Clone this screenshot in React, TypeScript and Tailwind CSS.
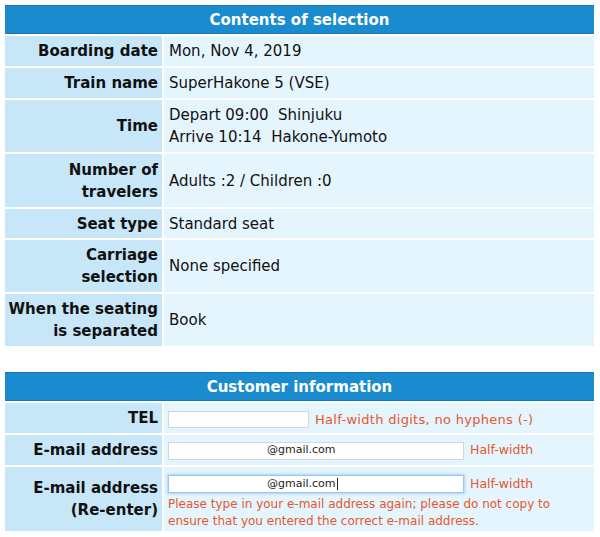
import React from "react";

const font = { fontFamily: '"DejaVu Sans", Verdana, sans-serif' };

function Label({ children, h }: { children: React.ReactNode; h: string }) {
  return (
    <div className={`bg-[#c7e6f8] flex items-center justify-end text-right pr-[4px] font-bold text-[15px] leading-[22px] text-[#111] ${h}`}>
      <div>{children}</div>
    </div>
  );
}

function Value({ children, h }: { children: React.ReactNode; h: string }) {
  return (
    <div className={`bg-[#e5f5fd] flex items-center pl-[5px] text-[15px] leading-[22px] text-[#111] ${h}`}>
      <div>{children}</div>
    </div>
  );
}

function Header({ title }: { title: string }) {
  return (
    <div className="col-span-2 h-[29px] pt-[2px] bg-[#1b8bcf] border-t border-b border-[#1677b5] flex items-center justify-center text-white font-bold text-[15px]">
      {title}
    </div>
  );
}

export default function App() {
  return (
    <div className="w-[600px] h-[537px] bg-white pt-[5px]" style={font}>
      <div className="ml-[5px] w-[589px] grid grid-cols-[157px_430px] gap-[2px]">
        <Header title="Contents of selection" />
        <Label h="h-[30px]">Boarding date</Label>
        <Value h="h-[30px]">Mon, Nov 4, 2019</Value>
        <Label h="h-[30px]">Train name</Label>
        <Value h="h-[30px]">SuperHakone 5 (VSE)</Value>
        <Label h="h-[52px]">Time</Label>
        <Value h="h-[52px]">
          <div className="whitespace-pre">Depart 09:00{"  "}Shinjuku</div>
          <div className="whitespace-pre">Arrive 10:14{"  "}Hakone-Yumoto</div>
        </Value>
        <Label h="h-[53px]">
          Number of
          <br />
          travelers
        </Label>
        <Value h="h-[53px]">Adults :2 / Children :0</Value>
        <Label h="h-[29px]">Seat type</Label>
        <Value h="h-[29px]">Standard seat</Value>
        <Label h="h-[52px]">
          Carriage
          <br />
          selection
        </Label>
        <Value h="h-[52px]">None specified</Value>
        <Label h="h-[52px]">
          When the seating
          <br />
          is separated
        </Label>
        <Value h="h-[52px]">Book</Value>
      </div>

      <div className="ml-[5px] mt-[26px] w-[589px] grid grid-cols-[157px_430px] gap-[2px]">
        <Header title="Customer information" />
        <Label h="h-[30px]">TEL</Label>
        <div className="bg-[#e5f5fd] h-[30px] flex items-center pl-[4px] pt-[3px]">
          <div className="w-[141px] h-[17px] bg-white border border-[#cfd6dc]" />
          <span className="ml-[6px] text-[13px] tracking-[0.3px] text-[#e5572f]">Half-width digits, no hyphens (-)</span>
        </div>
        <Label h="h-[30px]">E-mail address</Label>
        <div className="bg-[#e5f5fd] h-[30px] flex items-center pl-[4px] pt-[1px]">
          <div className="w-[296px] h-[18px] bg-white border border-[#cfd6dc] flex items-center pl-[98px] text-[11px] text-[#222]">
            @gmail.com
          </div>
          <span className="ml-[6px] text-[12.5px] text-[#e5572f]">Half-width</span>
        </div>
        <Label h="h-[64px]">
          E-mail address
          <br />
          (Re-enter)
        </Label>
        <div className="bg-[#e5f5fd] h-[64px] pl-[4px] pt-[8px]">
          <div className="flex items-center">
            <div className="w-[296px] h-[18px] bg-white border border-[#9cc6ee] shadow-[0_0_2px_1px_#a9d0f5] flex items-center pl-[98px] text-[11px] text-[#222]">
              @gmail.com<span className="inline-block w-px h-[12px] bg-[#222] ml-px" />
            </div>
            <span className="ml-[6px] text-[12.5px] text-[#e5572f]">Half-width</span>
          </div>
          <div className="mt-[2px] text-[12px] leading-[17px] text-[#e5572f]">
            Please type in your e-mail address again; please do not copy to
            <br />
            ensure that you entered the correct e-mail address.
          </div>
        </div>
      </div>
    </div>
  );
}
